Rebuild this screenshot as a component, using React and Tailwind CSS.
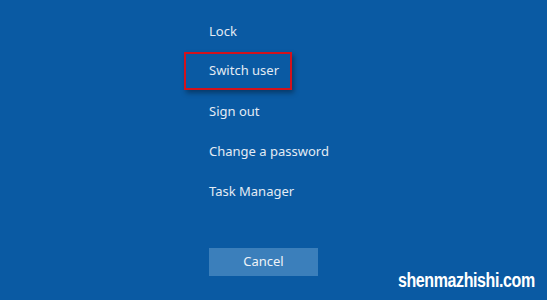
export default function App() {
  const items = ['Lock', 'Switch user', 'Sign out', 'Change a password', 'Task Manager'];

  return (
    <div
      className="relative w-[547px] h-[300px] overflow-hidden bg-[#0a5aa3] text-[#e3ebf4]"
      style={{ fontFamily: '"Noto Sans", "Open Sans", sans-serif' }}
    >
      <div className="flex flex-col pl-[209px] pt-[11px]">
        {items.map((label) => (
          <div key={label} className="h-[40px] flex items-center">
            {label === 'Switch user' ? (
              <div className="-ml-[25px] h-[38px] w-[108px] border-2 border-[#d3121c] shadow-[2px_3px_5px_rgba(0,0,0,0.35)] pl-[23px] flex items-center text-[13px]">
                {label}
              </div>
            ) : (
              <span className="text-[13px] leading-[22px]">{label}</span>
            )}
          </div>
        ))}
      </div>

      <div className="pl-[209px] pt-[37px]">
        <button className="w-[109px] h-[28px] bg-[#3b7fbb] text-[13px] text-[#eef3f8] flex items-center justify-center">
          Cancel
        </button>
      </div>

      <div
        className="absolute left-[398px] top-[266px] text-white font-bold text-[20px] leading-[28px] origin-left scale-x-[0.8] tracking-tight"
        style={{ fontFamily: '"Liberation Sans", Arial, sans-serif' }}
      >
        shenmazhishi.com
      </div>
    </div>
  );
}
